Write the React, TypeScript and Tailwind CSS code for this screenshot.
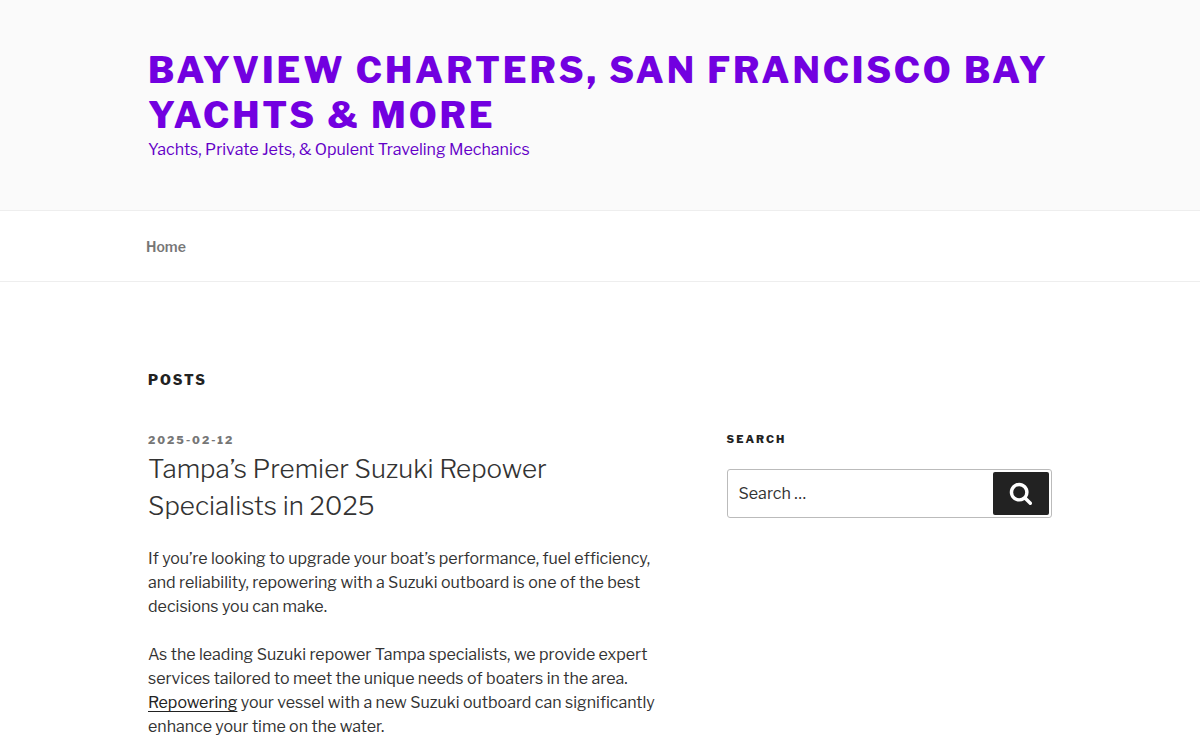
const navLinks = [{ label: 'Home', href: '#' }];

function SearchForm() {
  return (
    <form role="search" onSubmit={e => e.preventDefault()} className="relative">
      <input type="search" aria-label="Search for:" placeholder="Search …"
        className="block h-[49px] w-full rounded-[3px] border border-[#bbb] bg-white pl-[11px] pr-16 text-base text-[#666] placeholder:text-[#333]" />
      <button type="submit" aria-label="Search"
        className="absolute top-[3px] right-[3px] bottom-[3px] flex w-14 items-center justify-center rounded-xs bg-[#222] pb-0.5 text-white">
        <svg viewBox="0 0 30 32" className="h-6 w-6" fill="currentColor" aria-hidden="true">
          <path d="M20.571 14.857q0-3.304-2.348-5.652t-5.652-2.348-5.652 2.348-2.348 5.652 2.348 5.652 5.652 2.348 5.652-2.348 2.348-5.652zM29.714 29.714q0 0.929-0.679 1.607t-1.607 0.679q-0.964 0-1.607-0.679l-6.125-6.107q-3.196 2.214-7.125 2.214-2.554 0-4.884-0.991t-4.018-2.679-2.679-4.018-0.991-4.884 0.991-4.884 2.679-4.018 4.018-2.679 4.884-0.991 4.884 0.991 4.018 2.679 2.679 4.018 0.991 4.884q0 3.929-2.214 7.125l6.125 6.125q0.661 0.661 0.661 1.607z" />
        </svg>
      </button>
    </form>
  );
}

export default function App() {
  return (
    <div className="min-h-screen bg-white font-['Libre_Franklin','Open_Sans',sans-serif] text-base text-[#333]">
      <header className="border-b border-[#eee] bg-[#fafafa]">
        <div className="mx-auto max-w-[1000px] px-12 py-12">
          <h1 className="text-4xl leading-[45px] font-extrabold tracking-[0.08em] text-[#7200e0] uppercase">
            <a href="#">Bayview Charters, San Francisco Bay Yachts &amp; More</a>
          </h1>
          <p className="leading-6 text-[#6400c8]">Yachts, Private Jets, &amp; Opulent Traveling Mechanics</p>
        </div>
      </header>

      <nav className="border-b border-[#eee]">
        <ul className="mx-auto flex max-w-[1000px] px-[26px]">
          {navLinks.map(l => (
            <li key={l.label}>
              <a href={l.href} className="block px-5 pt-[26px] pb-6 text-sm font-semibold text-[#767676]">{l.label}</a>
            </li>
          ))}
        </ul>
      </nav>

      <div className="mx-auto max-w-[1000px] px-12 pt-[88px]">
        <h2 className="mb-10 text-sm leading-5 font-extrabold tracking-[2px] text-[#222] uppercase">Posts</h2>
        <div className="flex justify-between">
          <main className="w-[58%]">
            <article>
              <time dateTime="2025-02-12" className="block text-[11px] leading-5 font-extrabold tracking-[2px] text-[#767676]">2025-02-12</time>
              <h3 className="text-[26px] leading-[37px] font-light">
                <a href="#">Tampa’s Premier Suzuki Repower Specialists in 2025</a>
              </h3>
              <p className="mt-[23px] leading-6">
                If you’re looking to upgrade your boat’s performance, fuel efficiency, and reliability, repowering with a Suzuki outboard is one of the best decisions you can make.
              </p>
              <p className="mt-6 leading-6">
                As the leading Suzuki repower Tampa specialists, we provide expert services tailored to meet the unique needs of boaters in the area. <a href="#" className="text-[#222] underline decoration-1 underline-offset-[3px] [text-decoration-skip-ink:none]">Repowering</a> your vessel with a new Suzuki outboard can significantly enhance your time on the water.
              </p>
            </article>
          </main>
          <aside className="w-[36%]">
            <h2 className="mb-[21px] text-[11px] leading-[18px] font-extrabold tracking-[2px] text-[#222] uppercase">Search</h2>
            <SearchForm />
          </aside>
        </div>
      </div>
    </div>
  );
}
